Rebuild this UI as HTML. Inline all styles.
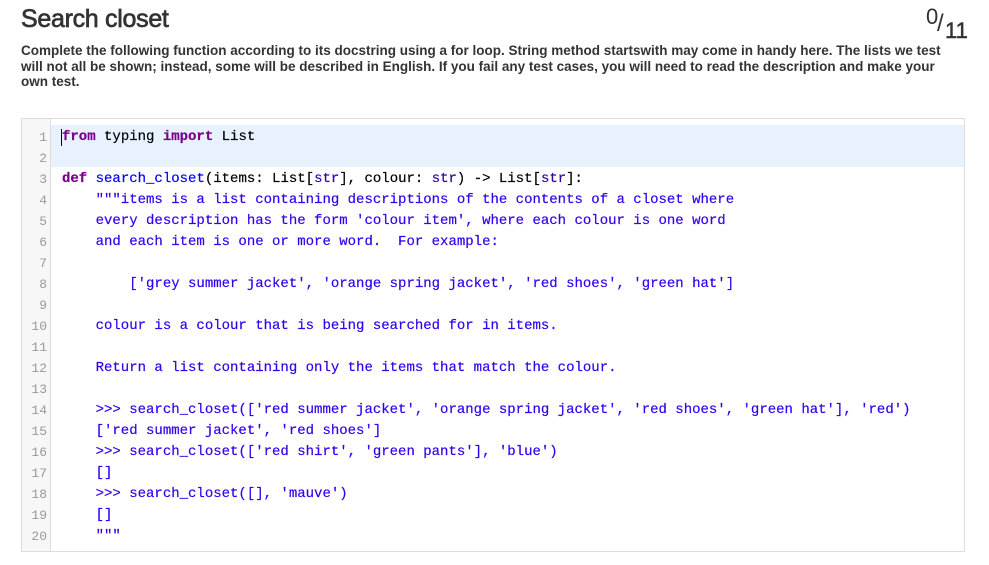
<!DOCTYPE html>
<html><head><meta charset="utf-8"><style>
body{margin:0;background:#fff;font-family:"Liberation Sans",Arial,sans-serif;color:#333;width:989px;height:565px;overflow:hidden;position:relative}
h1{position:absolute;left:21px;top:5px;margin:0;font-size:25px;font-weight:normal;letter-spacing:-0.3px;color:#333;-webkit-text-stroke:0.7px #333}
.score{position:absolute;left:926px;top:4px;font-size:22px;color:#333}
.score .n{position:absolute;left:0;top:0}
.score .sl{position:absolute;left:11px;top:6px;font-size:24px}
.score .d{position:absolute;left:19px;top:14px;-webkit-text-stroke:0.5px #333}
.desc{position:absolute;left:21px;top:43px;width:928px;font-size:13.5px;font-weight:bold;letter-spacing:0;line-height:15.5px;color:#333}
.ed{position:absolute;left:21px;top:118px;width:942px;height:432px;border:1px solid #ddd;background:#fff}
.gut{position:absolute;left:0;top:0;width:28px;height:432px;background:#f7f7f7;border-right:1px solid #ddd}
.hl{position:absolute;left:29px;top:6px;width:913px;height:42px;background:#e8f2fe}
.lines{position:absolute;left:0;top:8px;font-family:"Liberation Mono",monospace;font-size:14px;line-height:21px}
.ln{display:block;height:21px;white-space:pre}
.num{display:inline-block;width:25px;text-align:right;color:#999;font-size:13px}
.code{position:absolute;left:40px;top:0;white-space:pre;color:#000;-webkit-text-stroke:0.2px}
.k{color:#708;font-weight:bold}.f{color:#00f}.b{color:#30a}.s{color:#30e}
.cur{position:absolute;left:39px;top:10px;width:1px;height:17px;background:#000}
</style></head><body>
<h1>Search closet</h1>
<div class="score"><span class="n">0</span><span class="sl">/</span><span class="d">11</span></div>
<div class="desc">Complete the following function according to its docstring using a for loop. String method startswith may come in handy here. The lists we test will not all be shown; instead, some will be described in English. If you fail any test cases, you will need to read the description and make your own test.</div>
<div class="ed">
<div class="gut"></div>
<div class="hl"></div>
<div class="cur"></div>
<div class="lines">
<span class="ln"><span class="num">1</span></span><span class="ln"><span class="num">2</span></span><span class="ln"><span class="num">3</span></span><span class="ln"><span class="num">4</span></span><span class="ln"><span class="num">5</span></span><span class="ln"><span class="num">6</span></span><span class="ln"><span class="num">7</span></span><span class="ln"><span class="num">8</span></span><span class="ln"><span class="num">9</span></span><span class="ln"><span class="num">10</span></span><span class="ln"><span class="num">11</span></span><span class="ln"><span class="num">12</span></span><span class="ln"><span class="num">13</span></span><span class="ln"><span class="num">14</span></span><span class="ln"><span class="num">15</span></span><span class="ln"><span class="num">16</span></span><span class="ln"><span class="num">17</span></span><span class="ln"><span class="num">18</span></span><span class="ln"><span class="num">19</span></span><span class="ln"><span class="num">20</span></span>
<div class="code"><span class="ln"><span class="k">from</span> typing <span class="k">import</span> List</span><span class="ln"> </span><span class="ln"><span class="k">def</span> <span class="f">search_closet</span>(items: List[<span class="b">str</span>], colour: <span class="b">str</span>) -&gt; List[<span class="b">str</span>]:</span><span class="ln s">    """items is a list containing descriptions of the contents of a closet where</span><span class="ln s">    every description has the form 'colour item', where each colour is one word</span><span class="ln s">    and each item is one or more word.  For example:</span><span class="ln s"> </span><span class="ln s">        ['grey summer jacket', 'orange spring jacket', 'red shoes', 'green hat']</span><span class="ln s"> </span><span class="ln s">    colour is a colour that is being searched for in items.</span><span class="ln s"> </span><span class="ln s">    Return a list containing only the items that match the colour.</span><span class="ln s"> </span><span class="ln s">    &gt;&gt;&gt; search_closet(['red summer jacket', 'orange spring jacket', 'red shoes', 'green hat'], 'red')</span><span class="ln s">    ['red summer jacket', 'red shoes']</span><span class="ln s">    &gt;&gt;&gt; search_closet(['red shirt', 'green pants'], 'blue')</span><span class="ln s">    []</span><span class="ln s">    &gt;&gt;&gt; search_closet([], 'mauve')</span><span class="ln s">    []</span><span class="ln s">    """</span></div>
</div>
</div>
</body></html>
